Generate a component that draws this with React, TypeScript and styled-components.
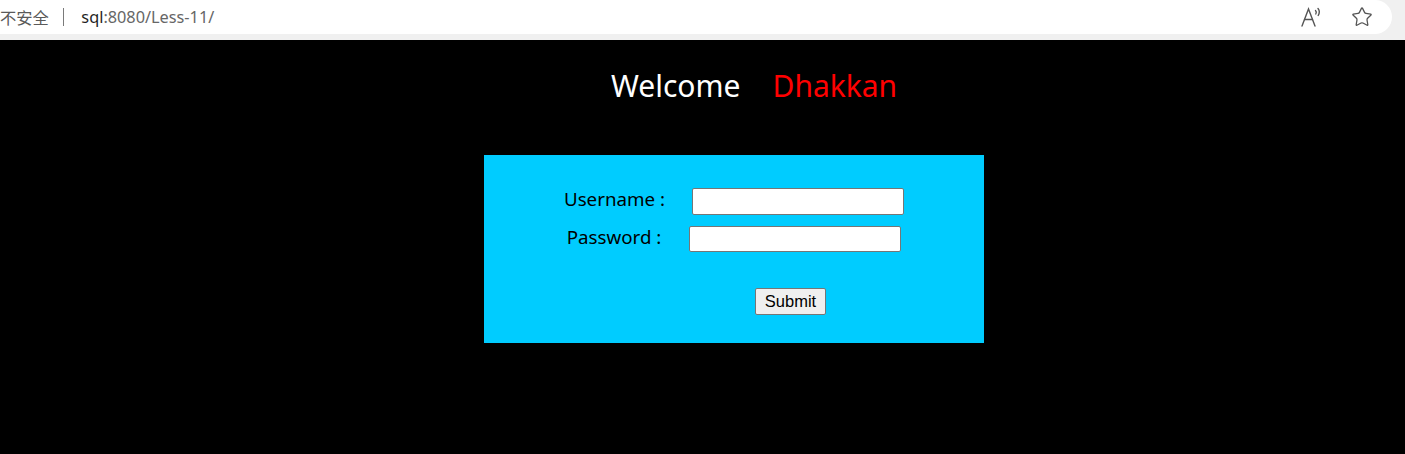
import styled, { createGlobalStyle } from "styled-components";
import { Star } from "lucide-react";

const GlobalStyle = createGlobalStyle`
  html, body {
    margin: 0;
    padding: 0;
    background: #000;
  }
  body {
    width: 1405px;
    height: 454px;
    overflow: hidden;
    font-family: "Noto Sans", "Noto Sans CJK SC", sans-serif;
  }
`;

const Chrome = styled.header`
  height: 40px;
  background: #f0f0f0;
  display: flex;
  align-items: flex-start;
  padding-right: 13px;
`;

const AddressBar = styled.div`
  flex: 1;
  height: 34px;
  background: #fff;
  border-radius: 0 17px 17px 0;
  display: flex;
  align-items: center;
  font-size: 16.3px;
  color: #666;
`;

const Insecure = styled.span`
  font-family: "Noto Sans CJK SC", sans-serif;
  color: #5a5a5a;
`;

const Divider = styled.span`
  width: 1.5px;
  height: 18px;
  background: #7a7a7a;
  margin: 0 17px 0 14px;
`;

const Host = styled.span`
  color: #1f1f1f;
`;

const ToolIcons = styled.div`
  margin-left: auto;
  display: flex;
  align-items: center;
  gap: 27px;
  padding-right: 19px;
  color: #555;
`;

const Page = styled.main`
  height: 414px;
  background: #000;
  padding-top: 26px;
  box-sizing: border-box;
`;

const Heading = styled.h1`
  margin: 0 0 0 611px;
  font-weight: 400;
  font-size: 30px;
  line-height: 40px;
  color: #fff;
  display: flex;
  gap: 32px;
`;

const Name = styled.span`
  color: #ff0000;
`;

const Panel = styled.form`
  margin: 49px 0 0 484px;
  width: 500px;
  height: 188px;
  background: #00ccff;
  padding-top: 33px;
  box-sizing: border-box;
  font-size: 18.75px;
  color: #000;
`;

const Row = styled.div<{ $gap: number }>`
  display: flex;
  justify-content: center;
  align-items: flex-start;
  gap: ${(p) => p.$gap}px;
  margin-bottom: 11px;
`;

const Label = styled.label`
  line-height: 22px;
`;

const Field = styled.input<{ $h?: number }>`
  width: 212px;
  height: ${(p) => p.$h ?? 27}px;
  box-sizing: border-box;
  border: 1px solid #767676;
  border-radius: 2px;
  background: #fff;
  padding: 1px 2px;
`;

const SubmitRow = styled.div`
  display: flex;
  justify-content: center;
  margin: 36px 0 0 113px;
`;

const Submit = styled.button`
  width: 71px;
  height: 27px;
  font-family: "Liberation Sans", Arial, sans-serif;
  font-size: 16.5px;
  color: #000;
  background: #efefef;
  border: 1px solid #767676;
  border-radius: 2px;
  padding: 0;
`;

function ReadAloudIcon() {
  return (
    <svg width="24" height="22" viewBox="0 0 24 22" fill="none" stroke="#555" strokeWidth="1.4" strokeLinecap="round">
      <path d="M2 20 L8.5 3 L15 20" />
      <path d="M4.6 13.5 H12.4" />
      <path d="M15.5 4.5 Q17 6 15.8 8" />
      <path d="M18 2.5 Q20.5 5.5 18.2 9.5" />
    </svg>
  );
}

export default function App() {
  return (
    <>
      <GlobalStyle />
      <Chrome>
        <AddressBar>
          <Insecure>不安全</Insecure>
          <Divider />
          <Host>sql</Host>
          <span>:8080/Less-11/</span>
          <ToolIcons>
            <ReadAloudIcon />
            <Star size={22} strokeWidth={1.4} />
          </ToolIcons>
        </AddressBar>
      </Chrome>
      <Page>
        <Heading>
          <span>Welcome</span>
          <Name>Dhakkan</Name>
        </Heading>
        <Panel onSubmit={(e) => e.preventDefault()}>
          <Row $gap={27}>
            <Label>Username :</Label>
            <Field type="text" name="uname" />
          </Row>
          <Row $gap={28}>
            <Label>Password :</Label>
            <Field type="text" name="passwd" $h={26} />
          </Row>
          <SubmitRow>
            <Submit type="submit">Submit</Submit>
          </SubmitRow>
        </Panel>
      </Page>
    </>
  );
}
